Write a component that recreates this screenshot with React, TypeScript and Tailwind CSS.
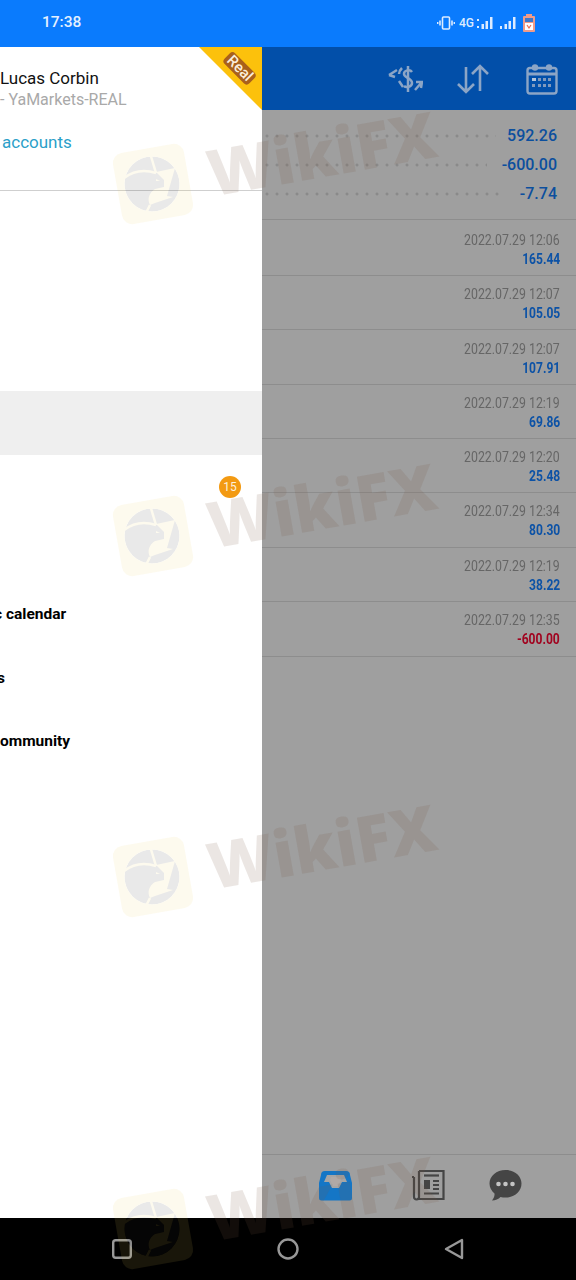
import React from 'react';

const rows = [
  { time: '2022.07.29 12:06', value: '165.44', h: 'h-[56px] pt-[4px]' },
  { time: '2022.07.29 12:07', value: '105.05', h: 'h-[54px] pt-[2px]' },
  { time: '2022.07.29 12:07', value: '107.91', h: 'h-[55px] pt-[2px]' },
  { time: '2022.07.29 12:19', value: '69.86', h: 'h-[54px] pt-[2px]' },
  { time: '2022.07.29 12:20', value: '25.48', h: 'h-[54px] pt-[2px]' },
  { time: '2022.07.29 12:34', value: '80.30', h: 'h-[55px] pt-[1px]' },
  { time: '2022.07.29 12:19', value: '38.22', h: 'h-[54px] pt-[2px]' },
  { time: '2022.07.29 12:35', value: '-600.00', h: 'h-[55px] pt-[1px]', loss: true },
];

const summary = [
  { value: '592.26', pad: 'pr-[11px]' },
  { value: '-600.00', pad: 'pr-[15px]' },
  { value: '-7.74', pad: 'pr-[17px]' },
];

const marks = [
  { top: 'top-[110px]', id: 'wm-a' },
  { top: 'top-[462px]', id: 'wm-b' },
  { top: 'top-[803px]', id: 'wm-c' },
  { top: 'top-[1155px]', id: 'wm-d' },
];

// aperture logo: the card shows through the shutter cuts, the eagle sits inside
const Watermark = ({ top, id }: { top: string; id: string }) => (
  <div className={`absolute left-[112px] h-[120px] w-[330px] pointer-events-none ${top}`}>
    <svg className="absolute left-0 top-[33px]" width="82" height="82" viewBox="0 0 82 82" overflow="visible">
      <defs>
        <mask id={`${id}-ring`} maskUnits="userSpaceOnUse" x="-5" y="-5" width="92" height="92">
          <circle cx="40" cy="41" r="27.500" fill="#fff" />
          <g stroke="#000" strokeWidth="2.500" fill="none">
            <path d="M12 35 C21 28 32 26 44 30" />
            <path d="M38 10 L44 30" />
          </g>
          <path d="M44 29 L52 37 L52 44 L43 46 C37 50 35 56 38 62 L43 60 L61 54 L55 53 L63 25 Z" fill="#000" />
          <path d="M38 62 L33 72" stroke="#000" strokeWidth="2.500" />
          <path d="M44 36 L48 38 L44 38 Z" fill="#000" />
        </mask>
        <mask id={`${id}-card`} maskUnits="userSpaceOnUse" x="-5" y="-5" width="92" height="92">
          <rect x="-5" y="-5" width="92" height="92" fill="#fff" />
          <rect x="-5" y="-5" width="92" height="92" fill="#000" mask={`url(#${id}-ring)`} />
        </mask>
      </defs>
      <g mask={`url(#${id}-card)`}>
        <rect x="5" y="5" width="72" height="72" rx="10" fill="rgba(236,208,94,0.106)" transform="rotate(-10 41 41)" />
      </g>
      <circle cx="40" cy="41" r="27.500" fill="rgba(47,47,47,0.106)" mask={`url(#${id}-ring)`} />
    </svg>
    <span className="absolute left-[94px] top-[-7px] whitespace-nowrap font-['Noto_Sans',sans-serif] text-[64px] font-black leading-[100px] text-[rgba(120,90,70,0.15)] -rotate-[10deg]">
      WikiFX
    </span>
  </div>
);

const StatusIcons = () => (
  <div className="flex items-center pr-[40px] text-[#dcebff]">
    <svg width="18" height="14" viewBox="0 0 18 14" fill="none" stroke="currentColor">
      <rect x="5.500" y="1" width="7" height="12" rx="1" strokeWidth="1.600" />
      <path d="M3 4.500v5M15 4.500v5" strokeWidth="1.600" />
      <path d="M0.700 6v2M17.300 6v2" strokeWidth="1.400" />
    </svg>
    <span className="ml-[4px] font-['Roboto',sans-serif] text-[12px] font-medium leading-none">4G</span>
    <svg className="ml-[3px]" width="16" height="14" viewBox="0 0 16 14" fill="currentColor">
      <rect x="0" y="3" width="2" height="2" />
      <rect x="0" y="10" width="2" height="2" />
      <rect x="4.500" y="8" width="2.500" height="5" />
      <rect x="8.500" y="5" width="2.500" height="8" />
      <rect x="13" y="1" width="2.500" height="12" />
    </svg>
    <svg className="ml-[7px]" width="16" height="14" viewBox="0 0 16 14" fill="currentColor">
      <rect x="0" y="10" width="2" height="3" />
      <rect x="4.500" y="8" width="2.500" height="5" />
      <rect x="8.500" y="5" width="2.500" height="8" />
      <rect x="13" y="1" width="2.500" height="12" />
    </svg>
    <svg className="ml-[6px]" width="14" height="18" viewBox="0 0 14 18">
      <rect x="4" y="0" width="6" height="2" fill="#f29a86" />
      <rect x="1" y="2" width="12" height="16" rx="1" fill="#ef9c8a" />
      <rect x="3" y="4" width="8" height="4" fill="#3f78c9" />
      <rect x="3" y="9" width="8" height="7" fill="#fff" />
      <path d="M5 11l2 3 2-3" stroke="#ef6a50" strokeWidth="1.200" fill="none" />
    </svg>
  </div>
);

const ExchangeIcon = () => (
  <svg width="36" height="32" viewBox="0 0 36 32" fill="none" stroke="#8ca5c6" strokeWidth="2.500">
    <path d="M21 3v26" />
    <path d="M25 9C23 6 17 7 17 11c0 4 8 4 8 9 0 4-6 5-8 3" />
    <path d="M2 12l8-5M2 12l6 2" />
    <path d="M15 5c-2 2-3 4-3 6M12 18l4 6" />
    <path d="M28 27l7-8M29 19h6l-1 6" />
  </svg>
);

const SortIcon = () => (
  <svg width="34" height="30" viewBox="0 0 34 30" fill="none" stroke="#8ca5c6" strokeWidth="2.600">
    <path d="M10 3v25M2 20l8 8 8-8" />
    <path d="M24 27V2M16 10l8-8 8 8" />
  </svg>
);

const CalendarIcon = () => (
  <svg width="32" height="32" viewBox="0 0 32 32" fill="none">
    <rect x="1.500" y="5" width="29" height="25.500" rx="2.500" stroke="#8ca5c6" strokeWidth="2.400" />
    <path d="M1.500 11h29" stroke="#8ca5c6" strokeWidth="3" />
    <circle cx="9" cy="4.500" r="3.200" fill="#8ca5c6" />
    <circle cx="23" cy="4.500" r="3.200" fill="#8ca5c6" />
    <g fill="#7f99bd">
      <rect x="6" y="15" width="4" height="3" fill="#b6c6da" />
      <rect x="12" y="15" width="3" height="3" />
      <rect x="17" y="15" width="3" height="3" />
      <rect x="22" y="15" width="3" height="3" />
      <rect x="6" y="21" width="3" height="3" />
      <rect x="12" y="21" width="3" height="3" />
      <rect x="17" y="21" width="3" height="3" />
      <rect x="22" y="21" width="3" height="3" />
    </g>
  </svg>
);

const InboxIcon = () => (
  <svg width="33" height="31" viewBox="0 0 33 31">
    <path d="M6 1h21a4 4 0 0 1 4 4l2 8v15a2.500 2.500 0 0 1-2.500 2.500h-28A2.500 2.500 0 0 1 0 28V13l2-8a4 4 0 0 1 4-4z" fill="#1476c6" />
    <path d="M5 12l3-7h17l3 7h-5l-3 6h-7l-3-6z" fill="#a5a5a5" />
    <path d="M11 10l1-3h9l1 3-3 6h-5z" fill="#b0a9a6" />
  </svg>
);

const NewsIcon = () => (
  <svg width="34" height="32" viewBox="0 0 34 32" fill="none" stroke="#454545" strokeWidth="2.200">
    <path d="M8 2h24.500v28H6" />
    <path d="M8 2v26a2.500 2.500 0 0 1-5 0V8" />
    <path d="M1 8h2" />
    <path d="M13 6.500h15" />
    <rect x="13" y="11" width="6" height="9" fill="#454545" stroke="none" />
    <path d="M22 12h6M22 16h6M22 20h6M13 24.500h15" />
  </svg>
);

const ChatIcon = () => (
  <svg width="33" height="32" viewBox="0 0 33 32">
    <path d="M16.500 1C7.500 1 0.500 7 0.500 14.500c0 4 2 7.500 5 10 .3 2.500-.8 5-2.500 7 3.500 0 6.500-1.500 8.500-3.500 1.600.4 3.300.6 5 .6 9 0 16-6 16-14S25.500 1 16.500 1z" fill="#454545" />
    <circle cx="9.500" cy="15" r="2.300" fill="#c4c4c4" />
    <circle cx="16.500" cy="15" r="2.300" fill="#c4c4c4" />
    <circle cx="23.500" cy="15" r="2.300" fill="#c4c4c4" />
  </svg>
);

const Drawer = () => (
  <aside className="relative w-[262px] shrink-0 overflow-hidden bg-white font-['Roboto',sans-serif]">
    <div className="absolute right-0 top-0 h-[63px] w-[63px] bg-[#fcc10c] [clip-path:polygon(0_0,100%_0,100%_100%)]" />
    <span className="absolute right-[5px] top-[14px] rotate-45 rounded-[4px] bg-[#a9601c] px-[3px] text-[15px] font-medium leading-[15px] text-[#fbeedb]">
      Real
    </span>

    <div className="h-[144px] border-b border-[#cfcfcf] pt-[20px]">
      <p className="text-[17px] leading-[23px] text-[#111]">Lucas Corbin</p>
      <p className="text-[16px] leading-[20px] text-[#a9a9a9]">- YaMarkets-REAL</p>
      <p className="mt-[21px] pl-[2px] text-[17px] leading-[23px] text-[#2b9fc9]">accounts</p>
    </div>

    <div className="mt-[200px] h-[64px] bg-[#efefef]" />

    <div className="flex justify-end pr-[21px] pt-[21px]">
      <span className="flex h-[22px] w-[22px] items-center justify-center rounded-full bg-[#f39a12] text-[12px] text-[#fdf1dc]">
        15
      </span>
    </div>

    <ul className="mt-[85px] text-[15.500px] font-bold text-black">
      <li className="-ml-[6px] flex h-[64px] items-center">c calendar</li>
      <li className="-ml-[3px] flex h-[63px] items-center">s</li>
      <li className="flex h-[64px] items-center">ommunity</li>
    </ul>
  </aside>
);

const TradePanel = () => (
  <section className="flex flex-1 flex-col bg-[#9f9f9f]">
    <header className="flex h-[63px] items-center justify-end bg-[#024fa9] pr-[18px]">
      <span className="mr-[33px] flex">
        <ExchangeIcon />
      </span>
      <span className="mr-[36px] flex">
        <SortIcon />
      </span>
      <CalendarIcon />
    </header>

    <div className="flex h-[110px] flex-col justify-center gap-[8px] border-b border-[#8d8d8d] pr-[19px]">
      {summary.map((item) => (
        <div key={item.value} className="flex h-[21px] items-center">
          <div className={`flex-1 ${item.pad}`}>
            <div className="h-[4px] bg-[radial-gradient(circle,#8a8a8a_1.200px,transparent_1.800px)] bg-[length:10px_4px] bg-repeat-x" />
          </div>
          <span className="font-['Roboto',sans-serif] text-[16px] font-medium text-[#0c4f9e]">{item.value}</span>
        </div>
      ))}
    </div>

    {rows.map((row, i) => (
      <div
        key={i}
        className={`flex flex-col items-end justify-center border-b border-[#8d8d8d] pr-[16px] ${row.h}`}
      >
        <span className="origin-right scale-x-[0.88] font-['Roboto',sans-serif] text-[14px] leading-[19px] text-[#666]">
          {row.time}
        </span>
        <span
          className={`origin-right scale-x-[0.86] font-['Roboto',sans-serif] text-[14px] font-bold leading-[18px] ${
            row.loss ? 'text-[#a1031f]' : 'text-[#0c52a6]'
          }`}
        >
          {row.value}
        </span>
      </div>
    ))}

    <div className="flex-1" />

    <footer className="flex h-[64px] items-center border-t border-[#8d8d8d] pb-[3px] pl-[57px]">
      <InboxIcon />
      <span className="ml-[59px] flex">
        <NewsIcon />
      </span>
      <span className="ml-[44px] flex">
        <ChatIcon />
      </span>
    </footer>
  </section>
);

export default function App() {
  return (
    <div className="relative flex h-[1280px] w-[576px] flex-col overflow-hidden bg-black">
      <div className="flex h-[47px] shrink-0 items-center justify-between bg-[#0a7bfd] pb-[1px] pl-[42px]">
        <span className="font-['Roboto',sans-serif] text-[15.500px] font-medium text-[#e4f0ff]">17:38</span>
        <StatusIcons />
      </div>

      <main className="flex min-h-0 flex-1">
        <Drawer />
        <TradePanel />
      </main>

      <nav className="flex h-[62px] shrink-0 items-center bg-black pl-[112px]">
        <svg width="20" height="20" viewBox="0 0 20 20" fill="none" stroke="#989898" strokeWidth="2.400">
          <rect x="1.200" y="1.200" width="17.600" height="17.600" rx="2.500" />
        </svg>
        <svg className="ml-[145px]" width="22" height="22" viewBox="0 0 22 22" fill="none" stroke="#989898" strokeWidth="2.400">
          <circle cx="11" cy="11" r="9.500" />
        </svg>
        <svg className="ml-[145px]" width="20" height="22" viewBox="0 0 20 22" fill="none" stroke="#989898" strokeWidth="2.400" strokeLinejoin="round">
          <path d="M2 11L18 2v18z" />
        </svg>
      </nav>

      {marks.map((mark) => (
        <Watermark key={mark.id} top={mark.top} id={mark.id} />
      ))}
    </div>
  );
}
